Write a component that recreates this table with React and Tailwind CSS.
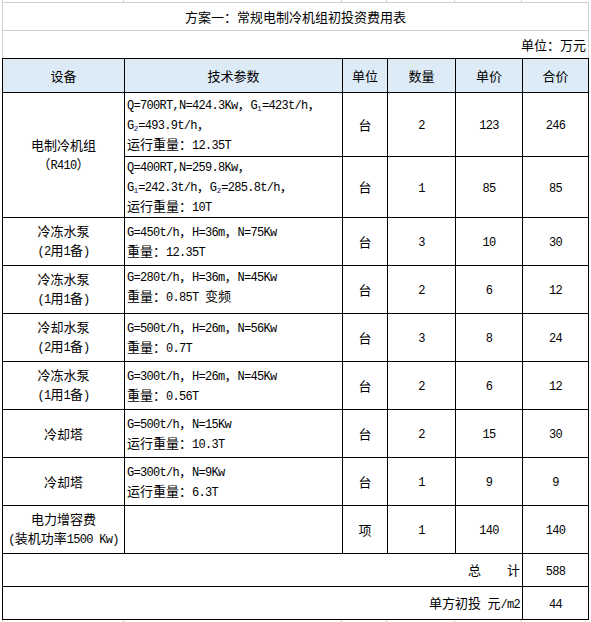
import React from 'react';

// ascii runs get a narrow mono face so they sit at half the width of a CJK char, like SimSun
function Txt({ s }) {
    const parts = s.match(/_\d|[\x20-\x5E\x60-\x7E]+|[^\x20-\x7E]+/g) || [];
    return parts.map((p, i) => {
        if (p[0] === '_') {
            return (
                <sub key={i} className="font-['Liberation_Mono',monospace] text-[8px] text-[#1a1a60]">
                    {p.slice(1)}
                </sub>
            );
        }
        if (/^[\x20-\x7E]/.test(p)) {
            return (
                <span key={i} className="font-['Liberation_Mono',monospace] text-[12px] tracking-[-0.7px]">
                    {p}
                </span>
            );
        }
        return <span key={i}>{p}</span>;
    });
}

function Lines({ lines, lh = 'leading-[17px]' }) {
    return (
        <div>
            {lines.map((l, i) => (
                <div key={i} className={`${lh} whitespace-pre`}>
                    <Txt s={l} />
                </div>
            ))}
        </div>
    );
}

const rows = [
    {
        name: ['电制冷机组', '（R410）'],
        span: 2,
        h: 'h-[64px]',
        tech: ['Q=700RT,N=424.3Kw，G_1=423t/h，', 'G_2=493.9t/h，', '运行重量：12.35T'],
        unit: '台', qty: '2', price: '123', total: '246',
    },
    {
        h: 'h-[60px]',
        tech: ['Q=400RT,N=259.8Kw，', 'G_1=242.3t/h，G_2=285.8t/h，', '运行重量：10T'],
        unit: '台', qty: '1', price: '85', total: '85',
    },
    {
        name: ['冷冻水泵', '(2用1备)'], h: 'h-[48px]',
        tech: ['G=450t/h，H=36m，N=75Kw', '重量：12.35T'],
        unit: '台', qty: '3', price: '10', total: '30',
    },
    {
        name: ['冷冻水泵', '(1用1备)'], h: 'h-[48px]', top: true,
        tech: ['G=280t/h，H=36m，N=45Kw', '重量：0.85T 变频'],
        unit: '台', qty: '2', price: '6', total: '12',
    },
    {
        name: ['冷却水泵', '(2用1备)'], h: 'h-[48px]',
        tech: ['G=500t/h，H=26m，N=56Kw', '重量：0.7T'],
        unit: '台', qty: '3', price: '8', total: '24',
    },
    {
        name: ['冷冻水泵', '(1用1备)'], h: 'h-[48px]',
        tech: ['G=300t/h，H=26m，N=45Kw', '重量：0.56T'],
        unit: '台', qty: '2', price: '6', total: '12',
    },
    {
        name: ['冷却塔'], h: 'h-[48px]',
        tech: ['G=500t/h，N=15Kw', '运行重量：10.3T'],
        unit: '台', qty: '2', price: '15', total: '30',
    },
    {
        name: ['冷却塔'], h: 'h-[48px]',
        tech: ['G=300t/h，N=9Kw', '运行重量：6.3T'],
        unit: '台', qty: '1', price: '9', total: '9',
    },
    {
        name: ['电力增容费', '(装机功率1500 Kw)'], h: 'h-[48px]',
        tech: [],
        unit: '项', qty: '1', price: '140', total: '140',
    },
];

const cell = 'border border-black p-0';

function Stubs({ h }) {
    return (
        <div className={`flex ${h}`}>
            <div className="w-[122px] border-l border-r border-[#d0d0d0]" />
            <div className="w-[218px] border-r border-[#d0d0d0]" />
            <div className="w-[45px] border-r border-[#d0d0d0]" />
            <div className="w-[68px] border-r border-[#d0d0d0]" />
            <div className="w-[67px] border-r border-[#d0d0d0]" />
            <div className="w-[66px]" />
        </div>
    );
}

export default function App() {
    return (
        <div className="w-[591px] h-[622px] bg-white overflow-hidden text-[13px] text-black font-['Noto_Sans_CJK_SC',sans-serif]">
            <div className="ml-[2px] w-[587px]">
                <Stubs h="h-[2px]" />
                <div className="h-[28px] border-t border-x border-[#d0d0d0] flex items-center justify-center">
                    <Txt s="方案一：常规电制冷机组初投资费用表" />
                </div>
                <div className="h-[28px] border-t border-x border-[#d0d0d0] flex items-center justify-end pr-[2px]">
                    <Txt s="单位：万元" />
                </div>
                <table className="border-collapse table-fixed w-[587px]">
                    <colgroup>
                        <col className="w-[122px]" />
                        <col className="w-[218px]" />
                        <col className="w-[45px]" />
                        <col className="w-[68px]" />
                        <col className="w-[67px]" />
                        <col className="w-[66px]" />
                    </colgroup>
                    <tbody>
                        <tr className="h-[34px] bg-[#ddebf7] text-center">
                            <td className={cell}>设备</td>
                            <td className={cell}>技术参数</td>
                            <td className={cell}>单位</td>
                            <td className={cell}>数量</td>
                            <td className={cell}>单价</td>
                            <td className={cell}>合价</td>
                        </tr>
                        {rows.map((r, i) => (
                            <tr key={i} className={r.h}>
                                {r.name && (
                                    <td className={`${cell} text-center align-middle`} rowSpan={r.span || 1}>
                                        <Lines lines={r.name} lh="leading-[19px]" />
                                    </td>
                                )}
                                <td className={`${cell} pl-[2px] ${r.top ? 'align-top pt-[1px]' : 'align-middle'}`}>
                                    <Lines lines={r.tech} />
                                </td>
                                <td className={`${cell} text-center`}><Txt s={r.unit} /></td>
                                <td className={`${cell} text-center`}><Txt s={r.qty} /></td>
                                <td className={`${cell} text-center`}><Txt s={r.price} /></td>
                                <td className={`${cell} text-center`}><Txt s={r.total} /></td>
                            </tr>
                        ))}
                        <tr className="h-[33px]">
                            <td className={`${cell} text-right pr-[2px] whitespace-pre`} colSpan={5}>
                                <Txt s="总    计" />
                            </td>
                            <td className={`${cell} text-center`}><Txt s="588" /></td>
                        </tr>
                        <tr className="h-[33px]">
                            <td className={`${cell} text-right pr-[2px]`} colSpan={5}>
                                <Txt s="单方初投 元/m2" />
                            </td>
                            <td className={`${cell} text-center`}><Txt s="44" /></td>
                        </tr>
                    </tbody>
                </table>
                <Stubs h="h-[6px]" />
            </div>
        </div>
    );
}
